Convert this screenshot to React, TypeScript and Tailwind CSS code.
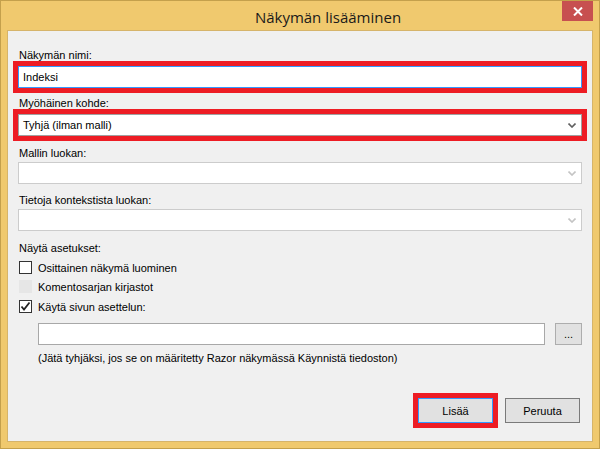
import React from "react"

const Chevron = ({ color }: { color: string }) => (
  <svg width="8" height="5" viewBox="0 0 8 5" className="mr-[5px]">
    <path d="M0.5 0.5 L4 4 L7.5 0.5" fill="none" stroke={color} strokeWidth="1.6" />
  </svg>
)

const Combo = ({ text, disabled }: { text?: string; disabled?: boolean }) => (
  <div
    className={`h-[22px] bg-white border flex items-center justify-between ${
      disabled ? "border-[#cccccc]" : "border-[#a0a0a0]"
    }`}
  >
    <span className="pl-[4px] text-black">{text}</span>
    <Chevron color={disabled ? "#c4c4c4" : "#606060"} />
  </div>
)

const Check = ({ checked, disabled }: { checked?: boolean; disabled?: boolean }) => (
  <div
    className={`w-[13px] h-[13px] border flex items-center justify-center ${
      disabled ? "bg-[#e6e6e6] border-[#e6e6e6]" : "bg-white border-[#333333]"
    }`}
  >
    {checked && (
      <svg width="11" height="11" viewBox="0 0 11 11">
        <path d="M1.5 5.5 L4 8.5 L9.5 1.5" fill="none" stroke="#222" strokeWidth="1.8" />
      </svg>
    )}
  </div>
)

const App: React.FC = () => {
  return (
    <div className="w-[600px] h-[449px] bg-[#f0c96e] border border-[#c4a04c] flex flex-col relative">
      <div className="h-[29px] flex items-center justify-center pl-[56px] pt-[4px]">
        <span className="text-[15px] text-[#1a1a1a] font-['Open_Sans',sans-serif]">
          Näkymän lisääminen
        </span>
      </div>
      <div className="absolute top-0 right-[6px] w-[31px] h-[20px] bg-[#c75050] flex items-center justify-center">
        <svg width="10" height="9" viewBox="0 0 10 9">
          <path d="M1 0.5 L9 8.5 M9 0.5 L1 8.5" stroke="white" strokeWidth="2" />
        </svg>
      </div>

      <div className="flex-1 mx-[6px] mb-[6px] bg-[#f0f0f0] border border-[#d6b46a] flex flex-col px-[5px] text-[11px] leading-[12px] text-black font-['Liberation_Sans',Arial,sans-serif]">
        <div className="mt-[18px] ml-[6px]">Näkymän nimi:</div>
        <div className="border-[5px] border-[#ed1c24]">
          <div className="h-[22px] bg-white border border-[#3399ff] flex items-center pl-[4px]">
            Indeksi
          </div>
        </div>

        <div className="mt-[4px] ml-[6px]">Myöhäinen kohde:</div>
        <div className="border-[5px] border-[#ed1c24]">
          <Combo text="Tyhjä (ilman malli)" />
        </div>

        <div className="mt-[6px] ml-[6px]">Mallin luokan:</div>
        <div className="mt-[3px] mx-[5px]">
          <Combo disabled />
        </div>

        <div className="mt-[10px] ml-[6px]">Tietoja kontekstista luokan:</div>
        <div className="mt-[3px] mx-[5px]">
          <Combo disabled />
        </div>

        <div className="mt-[11px] ml-[6px]">Näytä asetukset:</div>
        <div className="mt-[7px] ml-[6px] flex flex-col gap-[6px]">
          <div className="flex items-center gap-[6px] h-[13px]">
            <Check />
            <span>Osittainen näkymä luominen</span>
          </div>
          <div className="flex items-center gap-[6px] h-[13px]">
            <Check disabled />
            <span>Komentosarjan kirjastot</span>
          </div>
          <div className="flex items-center gap-[6px] h-[13px] mt-px">
            <Check checked />
            <span>Käytä sivun asettelun:</span>
          </div>
        </div>

        <div className="mt-[10px] ml-[25px] mr-[5px] flex gap-[10px]">
          <div className="flex-1 h-[22px] bg-white border border-[#a8a8a8]" />
          <div className="w-[27px] h-[22px] bg-[#e1e1e1] border border-[#adadad] flex items-center justify-center">
            ...
          </div>
        </div>

        <div className="mt-[7px] ml-[25px]">
          (Jätä tyhjäksi, jos se on määritetty Razor näkymässä Käynnistä tiedoston)
        </div>

        <div className="mt-auto mb-[13px] mr-[7px] flex items-center justify-end gap-[7px]">
          <div className="border-[5px] border-[#ed1c24]">
            <div className="w-[75px] h-[25px] bg-[#e1e1e1] border border-[#3399ff] flex items-center justify-center">
              Lisää
            </div>
          </div>
          <div className="w-[75px] h-[25px] bg-[#e1e1e1] border border-[#7a7a7a] flex items-center justify-center">
            Peruuta
          </div>
        </div>
      </div>
    </div>
  )
}

export default App
